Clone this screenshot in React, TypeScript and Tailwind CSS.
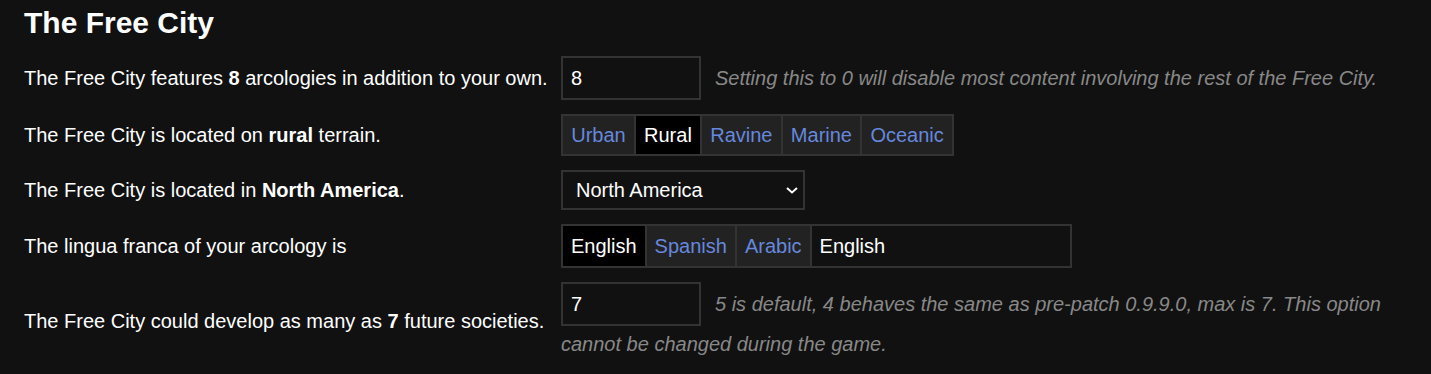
import { useState } from 'react'

const TERRAINS = ['Urban', 'Rural', 'Ravine', 'Marine', 'Oceanic']
const LANGS = ['English', 'Spanish', 'Arabic']

export default function App() {
  const [terrain, setTerrain] = useState('Rural')
  const [lang, setLang] = useState('English')
  const [arcs, setArcs] = useState('8')
  const [societies, setSocieties] = useState('7')

  return (
    <div className="min-h-[374px] bg-[#111111] px-6 pt-[5px] text-[20px] text-white font-['Liberation_Sans',Arial,sans-serif]">
      <h2 className="text-[30px] leading-[36px] font-bold">The Free City</h2>

      <div className="mt-[15px] grid grid-cols-[537px_1fr] gap-y-[14px] items-center">
        <div>
          The Free City features <b>{arcs}</b> arcologies in addition to your own.
        </div>
        <div className="leading-[27px]">
          <input
            value={arcs}
            onChange={e => setArcs(e.target.value)}
            className="h-[44px] w-[140px] border-2 border-[#333] bg-[#111] px-[8px] align-middle text-white outline-none"
          />
          <span className="ml-[14px] align-middle italic text-[#888]">
            Setting this to 0 will disable most content involving the rest of the Free City.
          </span>
        </div>

        <div>
          The Free City is located on <b>{terrain.toLowerCase()}</b> terrain.
        </div>
        <div className="flex">
          <div className="flex border-2 border-[#333] bg-[#333] gap-[2px]">
            {TERRAINS.map(t => (
              <button
                key={t}
                onClick={() => setTerrain(t)}
                className={
                  'h-[38px] px-[8.2px] ' +
                  (terrain === t ? 'bg-black text-white' : 'bg-[#222] text-[#6688dd]')
                }
              >
                {t}
              </button>
            ))}
          </div>
        </div>

        <div>
          The Free City is located in <b>North America</b>.
        </div>
        <div className="flex">
          <div className="relative">
            <select className="h-[40px] w-[244px] appearance-none border-2 border-[#333] bg-[#111] pl-[13px] text-white outline-none">
              <option>North America</option>
              <option>South America</option>
              <option>Europe</option>
              <option>Africa</option>
              <option>Asia</option>
              <option>Australia</option>
            </select>
            <svg
              className="pointer-events-none absolute right-[7px] top-[17px]"
              width="12"
              height="7"
              viewBox="0 0 12 7"
              fill="none"
              stroke="white"
              strokeWidth="2"
            >
              <path d="M1 1l5 4.5L11 1" />
            </svg>
          </div>
        </div>

        <div>The lingua franca of your arcology is</div>
        <div className="flex">
          <div className="flex border-2 border-r-0 border-[#333] bg-[#333] gap-[2px]">
            {LANGS.map(l => (
              <button
                key={l}
                onClick={() => setLang(l)}
                className={
                  'h-[40px] px-[8px] ' +
                  (lang === l ? 'bg-black text-white' : 'bg-[#222] text-[#6688dd]')
                }
              >
                {l}
              </button>
            ))}
          </div>
          <input
            value={lang}
            onChange={e => setLang(e.target.value)}
            className="h-[44px] w-[262px] border-2 border-[#333] bg-[#111] px-[8px] text-white outline-none"
          />
        </div>

        <div>
          The Free City could develop as many as <b>{societies}</b> future societies.
        </div>
        <div className="leading-[32px]">
          <input
            value={societies}
            onChange={e => setSocieties(e.target.value)}
            className="h-[44px] w-[140px] border-2 border-[#333] bg-[#111] px-[8px] align-middle text-white outline-none"
          />
          <span className="ml-[14px] align-middle italic text-[#888]">
            5 is default, 4 behaves the same as pre-patch 0.9.9.0, max is 7. This option cannot be changed during the game.
          </span>
        </div>
      </div>
    </div>
  )
}
